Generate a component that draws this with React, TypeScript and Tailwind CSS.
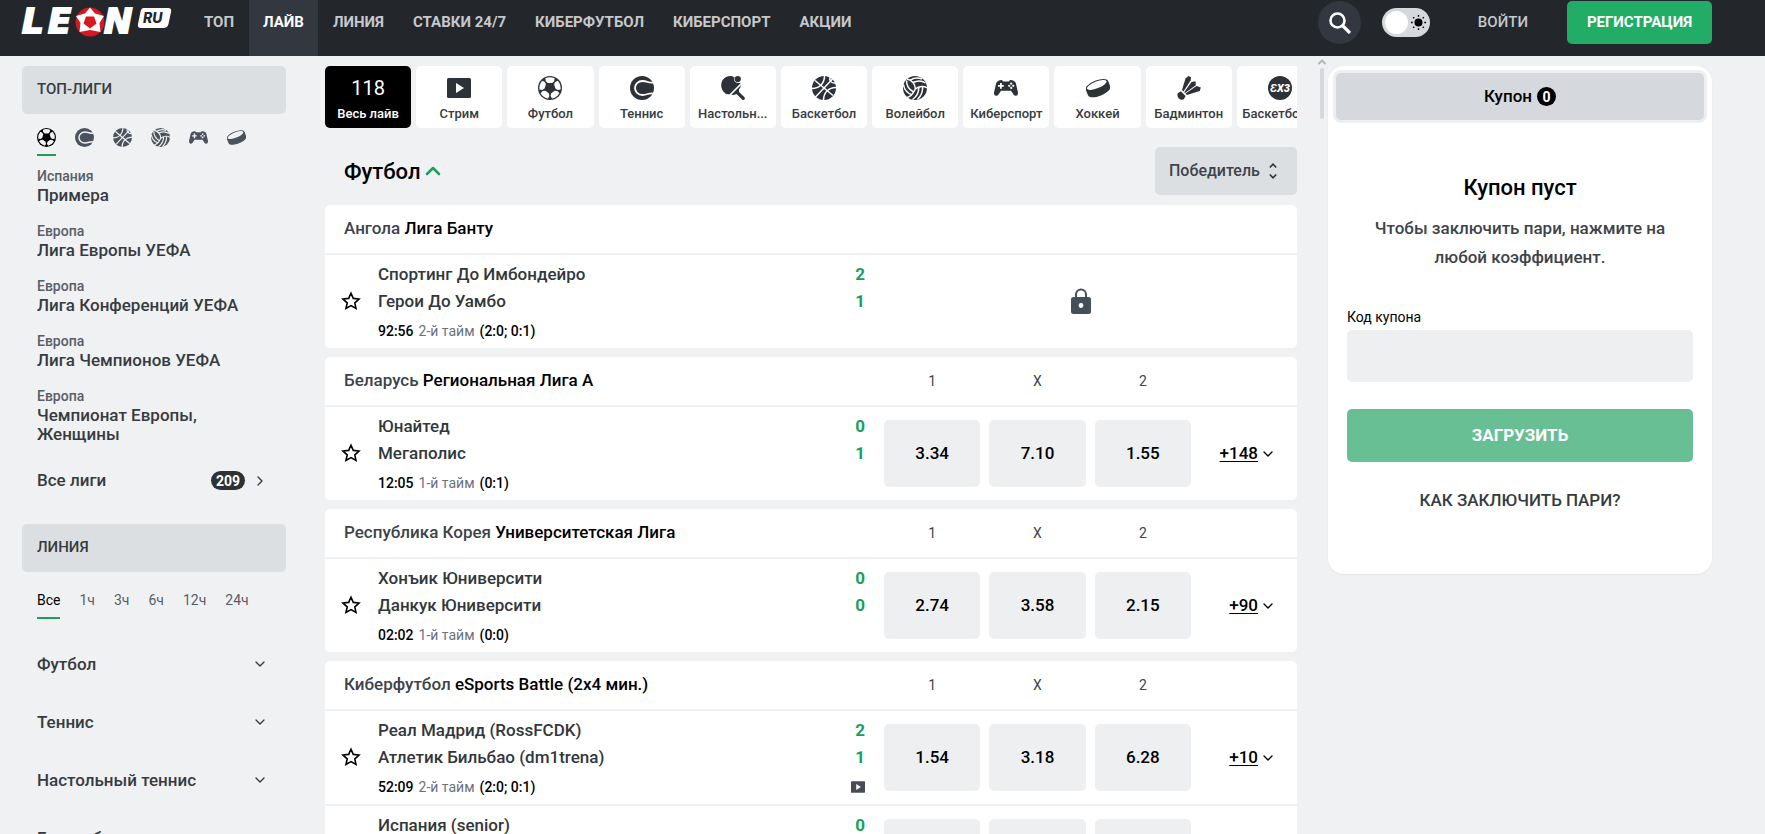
import { ChevronDown, ChevronRight, ChevronUp } from 'lucide-react';
import { ReactNode, useState } from 'react';
import clsx from 'clsx';

type IconName =
  | 'stream'
  | 'football'
  | 'tennis'
  | 'tableTennis'
  | 'basketball'
  | 'volleyball'
  | 'esports'
  | 'hockey'
  | 'badminton'
  | 'basketball3x3';

interface Match {
  home: string;
  away: string;
  score: [number, number];
  time: string;
  period: string;
  periods: string;
  odds?: string[];
  more?: string;
  stream?: boolean;
}

interface League {
  region: string;
  name: string;
  matches: Match[];
}

const NAV = ['ТОП', 'ЛАЙВ', 'ЛИНИЯ', 'СТАВКИ 24/7', 'КИБЕРФУТБОЛ', 'КИБЕРСПОРТ', 'АКЦИИ'];

const SPORT_TABS: { icon: IconName; label: string }[] = [
  { icon: 'stream', label: 'Стрим' },
  { icon: 'football', label: 'Футбол' },
  { icon: 'tennis', label: 'Теннис' },
  { icon: 'tableTennis', label: 'Настольн...' },
  { icon: 'basketball', label: 'Баскетбол' },
  { icon: 'volleyball', label: 'Волейбол' },
  { icon: 'esports', label: 'Киберспорт' },
  { icon: 'hockey', label: 'Хоккей' },
  { icon: 'badminton', label: 'Бадминтон' },
  { icon: 'basketball3x3', label: 'Баскетбол...' },
];

const TOP_SPORTS: { icon: IconName; label: string }[] = [
  { icon: 'football', label: 'Футбол' },
  { icon: 'tennis', label: 'Теннис' },
  { icon: 'basketball', label: 'Баскетбол' },
  { icon: 'volleyball', label: 'Волейбол' },
  { icon: 'esports', label: 'Киберспорт' },
  { icon: 'hockey', label: 'Хоккей' },
];

const TOP_LEAGUES = [
  { region: 'Испания', name: 'Примера' },
  { region: 'Европа', name: 'Лига Европы УЕФА' },
  { region: 'Европа', name: 'Лига Конференций УЕФА' },
  { region: 'Европа', name: 'Лига Чемпионов УЕФА' },
  { region: 'Европа', name: 'Чемпионат Европы, Женщины' },
];

const HOURS = ['Все', '1ч', '3ч', '6ч', '12ч', '24ч'];

const LINE_SPORTS = ['Футбол', 'Теннис', 'Настольный теннис', 'Баскетбол'];

const LEAGUES: League[] = [
  {
    region: 'Ангола',
    name: 'Лига Банту',
    matches: [
      { home: 'Спортинг До Имбондейро', away: 'Герои До Уамбо', score: [2, 1], time: '92:56', period: '2-й тайм', periods: '(2:0; 0:1)' },
    ],
  },
  {
    region: 'Беларусь',
    name: 'Региональная Лига А',
    matches: [
      { home: 'Юнайтед', away: 'Мегаполис', score: [0, 1], time: '12:05', period: '1-й тайм', periods: '(0:1)', odds: ['3.34', '7.10', '1.55'], more: '+148' },
    ],
  },
  {
    region: 'Республика Корея',
    name: 'Университетская Лига',
    matches: [
      { home: 'Хонъик Юниверсити', away: 'Данкук Юниверсити', score: [0, 0], time: '02:02', period: '1-й тайм', periods: '(0:0)', odds: ['2.74', '3.58', '2.15'], more: '+90' },
    ],
  },
  {
    region: 'Киберфутбол',
    name: 'eSports Battle (2x4 мин.)',
    matches: [
      { home: 'Реал Мадрид (RossFCDK)', away: 'Атлетик Бильбао (dm1trena)', score: [2, 1], time: '52:09', period: '2-й тайм', periods: '(2:0; 0:1)', odds: ['1.54', '3.18', '6.28'], more: '+10', stream: true },
      { home: 'Испания (senior)', away: 'Франция (klever)', score: [0, 0], time: '12:40', period: '1-й тайм', periods: '(0:0)', odds: ['2.20', '3.60', '2.70'], more: '+12', stream: true },
    ],
  },
];

// --cut is the colour of the seams, it has to be the same as the surface behind the icon
const ICONS: Record<IconName, ReactNode> = {
  stream: (
    <>
      <rect x="0" y="2" width="24" height="20" rx="1.5" fill="currentColor" />
      <path d="M9 7l8 5-8 5z" fill="var(--cut)" />
    </>
  ),
  football: (
    <>
      <circle cx="12" cy="12" r="12" fill="currentColor" />
      {[0, 72, 144, 216, 288].map((angle) => (
        <path
          key={angle}
          d="M7.400 2.300Q12 .4 16.600 2.300L16.200 5.200L14.200 7H9.800L7.800 5.200z"
          transform={`rotate(${angle} 12 12)`}
          fill="var(--cut)"
        />
      ))}
    </>
  ),
  tennis: (
    <>
      <circle cx="12" cy="12" r="12" fill="currentColor" />
      <path d="M23 6.500C19 7.500 17.500 5 12.500 5C8 5 5 8.500 5 12C5 15.500 8 19 12.500 19C17.500 19 19 16.500 23 17.500" fill="none" stroke="var(--cut)" strokeWidth="1.800" />
    </>
  ),
  tableTennis: (
    <>
      <path d="M2.500 3C5.500-.5 11.500-.8 13.600 1.800C12.600 4 13.500 6.500 16.500 7C18 7.200 19 6.800 19.200 6.800C20.500 9.500 19.500 12 18 13.500L18 16L23.500 21.200Q24.500 23 23 23.800Q21.800 24.400 20.800 23.300L15.500 18L12.500 19L5 18C-.8 14-1 7 2.500 3z" fill="currentColor" />
      <circle cx="16.800" cy="3.100" r="3.100" fill="currentColor" />
      <path d="M7.500 20.500L20 8" stroke="var(--cut)" strokeWidth="1.700" />
    </>
  ),
  basketball: (
    <>
      <circle cx="12" cy="12" r="12" fill="currentColor" />
      <g fill="none" stroke="var(--cut)" strokeWidth="1.500">
        <path d="M3 4.500L21 19.500M20.500 3L3.500 21" />
        <path d="M12.500-.5C12.500 8 7 12.500-.5 12.500M24.500 11.500C17 11.500 11.500 16 11.500 24.500" />
        <path d="M18 .5C17 5 19.500 7.500 23.500 7" />
      </g>
    </>
  ),
  volleyball: (
    <>
      <circle cx="12" cy="12" r="12" fill="currentColor" />
      <g fill="none" stroke="var(--cut)" strokeWidth="1.500">
        <path d="M12.300 13C12.500 9 9.500 4 4 3M12.300 13C16 10 21 9.500 24 12M12.300 13C10 18 7 21 4 21.500" />
        <path d="M9.800 6.500C14 4.500 19 4.500 22.500 7M7 4.300C11 1.500 15 1.500 19 3" />
        <path d="M10.500 16C6 13.500 3.500 9 3.500 4.500M9 18.800C4 17 1 13 .5 8.500" />
        <path d="M15.800 11C16 16 13.500 20.500 9.500 23.500M19.500 10.200C20 15 18 20 14.500 23.500" />
      </g>
    </>
  ),
  esports: (
    <>
      <path d="M5 4.500Q6 3.800 8 4L9 5.500H15L16 4Q18 3.800 19 4.500Q21 5 21.800 7L24 16.500Q24.200 19.500 22 19.800Q20.500 20 19.500 18.500L17 14.800H7L4.500 18.500Q3.500 20 2 19.800Q-.2 19.500 0 16.500L2.200 7Q3 5 5 4.500z" fill="currentColor" />
      <g fill="var(--cut)">
        <path d="M6 7h1.800v2h2v1.800h-2v2H6v-2H4V9h2z" />
        <circle cx="15.200" cy="9.800" r="1.100" />
        <circle cx="19.200" cy="9.800" r="1.100" />
        <circle cx="17.200" cy="7.700" r="1.100" />
        <circle cx="17.200" cy="11.900" r="1.100" />
      </g>
    </>
  ),
  hockey: (
    <>
      <g transform="rotate(-22 12 12)">
        <path d="M0 9.500V15C0 18 5.500 20 12 20S24 18 24 15V9.500z" fill="currentColor" />
        <ellipse cx="12" cy="9" rx="12" ry="4.800" fill="currentColor" />
        <ellipse cx="12" cy="8.700" rx="10.500" ry="3.400" fill="var(--cut)" />
      </g>
    </>
  ),
  badminton: (
    <>
      <path d="M.8 17.200L3.800 15.200L8.600 20L6.800 23.200Q4.500 24.500 1.800 22.400Q-.4 19.800.8 17.200z" fill="currentColor" />
      <g fill="currentColor">
        <path d="M5 14L8.500 2.500L11.500 0L14 1.200L13.600 4.500L6.500 15.500z" />
        <path d="M7.200 16.200L14.500 6L18.500 5.200L18.800 9.200L8 17z" />
        <path d="M8.500 17.600L19.500 10L23.800 11.500L22.800 15L9.800 19z" />
      </g>
    </>
  ),
  basketball3x3: (
    <>
      <circle cx="12" cy="12" r="12" fill="currentColor" />
      <text x="12" y="16" textAnchor="middle" fontSize="11" fontWeight="900" fontStyle="italic" fill="var(--cut)" fontFamily="Roboto, sans-serif">
        ƐX3
      </text>
    </>
  ),
};

function SportIcon({ name, className }: { name: IconName; className?: string }) {
  return (
    <svg viewBox="0 0 24 24" className={clsx('shrink-0', className)} aria-hidden="true">
      {ICONS[name]}
    </svg>
  );
}

function Logo() {
  return (
    <svg viewBox="0 0 150 30" className="h-[30px] w-[150px] overflow-visible" role="img" aria-label="LEON RU">
      <g fill="#fff" stroke="#fff" strokeWidth="2" fontFamily="'DejaVu Sans', sans-serif" fontWeight="700" fontStyle="italic" fontSize="34">
        <text x="0" y="26">L</text>
        <text x="26" y="26">E</text>
        <text x="82" y="26">N</text>
      </g>
      <circle cx="68" cy="15" r="14.500" fill="#d8171e" />
      <path d="M68 .5L73 6.500L82 9L77.500 16L78.500 25L68 23L57.500 25L58.500 16L54 9L63 6.500z" fill="#fff" />
      <path d="M64 9.500H72L74.500 16.500L68 21.500L61.500 16.500z" fill="#d8171e" />
      <path d="M122 1H146Q150 1 149 5L146.500 17Q145.500 21 141.500 21H119Q115 21 116 17L118.500 5Q119 1 122 1z" fill="#fff" />
      <text x="121" y="16" fontFamily="Inter, sans-serif" fontWeight="800" fontStyle="italic" fontSize="14" fill="#23262b">
        RU
      </text>
    </svg>
  );
}

function Header() {
  return (
    <header className="flex h-14 items-center bg-[#23262b] pr-[53px] pl-[22px] text-[15px] font-bold text-[#c5c8cc]">
      <a href="#home" className="mr-[18px] pb-3">
        <Logo />
      </a>
      <nav className="flex h-full gap-px">
        {NAV.map((item) => (
          <a
            key={item}
            href={`#${item}`}
            className={clsx('flex items-center px-[14px] pb-3', item === 'ЛАЙВ' && 'bg-[#333840] text-white')}
          >
            {item}
          </a>
        ))}
      </nav>
      <div className="ml-auto flex items-center pb-3">
        <button className="flex size-[43px] items-center justify-center rounded-full bg-[#333840]" aria-label="Поиск">
          <svg viewBox="0 0 24 24" className="size-6" fill="none" stroke="#fff" strokeWidth="2.600">
            <circle cx="10.500" cy="10.500" r="7" />
            <path d="M15.500 15.500L23 23" strokeWidth="3.200" />
          </svg>
        </button>
        <label className="relative ml-[21px] h-[29px] w-12 cursor-pointer rounded-full bg-[#d5d8dd] p-[3px]">
          <input type="checkbox" className="peer sr-only" aria-label="Тёмная тема" />
          <span className="block size-[23px] rounded-full bg-white" />
          <svg viewBox="0 0 16 16" className="absolute top-[7px] right-[4px] size-[15px] text-black" aria-hidden="true">
            <circle cx="8" cy="8" r="4.300" fill="currentColor" />
            <path d="M8 0v1.800M8 14.200V16M0 8h1.800M14.200 8H16M2.300 2.300l1.200 1.200M12.500 12.500l1.200 1.200M2.300 13.700l1.200-1.200M12.500 3.500l1.200-1.200" stroke="currentColor" strokeWidth="1.500" />
          </svg>
        </label>
        <button className="ml-12 font-medium">ВОЙТИ</button>
        <button className="ml-[39px] h-[43px] w-[145px] rounded-[5px] bg-[#21ad66] text-white">РЕГИСТРАЦИЯ</button>
      </div>
    </header>
  );
}

function Sidebar() {
  const [hours, setHours] = useState('Все');

  return (
    <aside className="w-[264px] shrink-0 text-[17px] leading-[19px] font-medium text-[#363b41] [--cut:#f0f1f3]">
      <h2 className="flex h-12 items-center rounded-[5px] bg-[#dcdfe2] px-[15px] pb-px text-[15px]">ТОП-ЛИГИ</h2>
      <div className="mt-[14px] flex gap-[19px] px-[15px]">
        {TOP_SPORTS.map(({ icon, label }, i) => (
          <button
            key={icon}
            aria-label={label}
            className={clsx('border-b-2 pb-[7px]', i === 0 ? 'border-[#1b9f5c] text-black' : 'border-transparent text-[#4a525c]')}
          >
            <SportIcon name={icon} className="size-[19px]" />
          </button>
        ))}
      </div>
      <ul className="mt-[11px] flex flex-col gap-[17px] px-[15px]">
        {TOP_LEAGUES.map(({ region, name }) => (
          <li key={name}>
            <a href="#league" className="block">
              <span className="block text-sm leading-[19px] text-[#565e67]">{region}</span>
              {name}
            </a>
          </li>
        ))}
      </ul>
      <a href="#all" className="mt-[27px] flex h-[19px] items-center pr-[18px] pl-[15px]">
        Все лиги
        <span className="ml-auto flex h-[19px] items-center rounded-full bg-[#2d3237] px-[5px] text-sm font-bold text-white">209</span>
        <ChevronRight className="ml-[7px] size-4" />
      </a>

      <h2 className="mt-[34px] flex h-12 items-center rounded-[5px] bg-[#dcdfe2] px-[15px] pb-px text-[15px]">ЛИНИЯ</h2>
      <div className="mt-[19px] flex gap-[19px] px-[15px] text-sm font-normal">
        {HOURS.map((item) => (
          <button
            key={item}
            onClick={() => setHours(item)}
            className={clsx('border-b-2 pb-[7px] leading-[19px]', hours === item ? 'border-[#1b9f5c] text-black' : 'border-transparent text-[#565e67]')}
          >
            {item}
          </button>
        ))}
      </div>
      <ul className="mt-4">
        {LINE_SPORTS.map((sport) => (
          <li key={sport}>
            <button className="flex h-[58px] w-full items-center justify-between pr-[18px] pl-[15px]">
              {sport}
              <ChevronDown className="size-4" />
            </button>
          </li>
        ))}
      </ul>
    </aside>
  );
}

function MatchRow({ match }: { match: Match }) {
  return (
    <div className="flex h-[95px] items-center border-t-2 border-[#f0f1f3]">
      <button className="ml-4 pb-px text-black" aria-label="В избранное">
        <svg viewBox="0 0 20 20" className="size-5" fill="none" stroke="currentColor" strokeWidth="1.600">
          <path d="M10 2.200L12.300 7.400L18 8L13.800 11.800L15 17.500L10 14.600L5 17.500L6.200 11.800L2 8L7.700 7.400z" />
        </svg>
      </button>
      <div className="ml-[17px] min-w-0 flex-1 pb-px text-[17px] leading-[27px] font-medium text-[#32373d]">
        <div className="flex justify-between">
          <span className="truncate">{match.home}</span>
          <span className="font-bold text-[#1b9f5c]">{match.score[0]}</span>
        </div>
        <div className="flex justify-between">
          <span className="truncate">{match.away}</span>
          <span className="font-bold text-[#1b9f5c]">{match.score[1]}</span>
        </div>
        <div className="mt-[6px] flex items-center gap-[5px] text-sm leading-5 text-black">
          <span>{match.time}</span>
          <span className="font-normal text-[#6b727a]">{match.period}</span>
          <span>{match.periods}</span>
          {match.stream && <SportIcon name="stream" className="ml-auto size-[14px] text-[#454d57] [--cut:#fff]" />}
        </div>
      </div>
      {match.odds ? (
        <>
          <div className="ml-[19px] grid w-[307px] grid-cols-3 gap-[9px]">
            {match.odds.map((odd) => (
              <button key={odd} className="h-[67px] rounded-[5px] bg-[#eeeff1] text-[17px] font-medium text-black">
                {odd}
              </button>
            ))}
          </div>
          <a href="#match" className="flex w-[106px] items-center justify-end pr-[21px] text-[17px] font-medium text-black">
            <span className="underline underline-offset-2">{match.more}</span>
            <ChevronDown className="ml-[2px] size-4" />
          </a>
        </>
      ) : (
        <div className="ml-[19px] flex w-[413px] justify-center pr-[19px] pb-[2px] text-[#464e58]">
          <svg viewBox="0 0 20 26" className="h-[26px] w-5" aria-label="Приём ставок закрыт">
            <path d="M5 10V6.500a5 5 0 0 1 10 0V10" fill="none" stroke="currentColor" strokeWidth="2" />
            <rect x="0" y="9" width="20" height="17" rx="2.500" fill="currentColor" />
            <circle cx="10" cy="17.500" r="2.400" fill="#fff" />
          </svg>
        </div>
      )}
    </div>
  );
}

function LeagueCard({ league }: { league: League }) {
  const hasOdds = league.matches.some((match) => match.odds);

  return (
    <section className="overflow-hidden rounded-[5px] bg-white">
      <header className="flex h-12 items-center pr-[106px] pl-[19px]">
        <h3 className="flex-1 text-[17px] font-medium text-black">
          <span className="text-[#3d434a]">{league.region}</span> {league.name}
        </h3>
        {hasOdds && (
          <div className="grid w-[307px] grid-cols-3 gap-[9px] text-center text-sm text-[#3d434a]">
            <span>1</span>
            <span>X</span>
            <span>2</span>
          </div>
        )}
      </header>
      {league.matches.map((match) => (
        <MatchRow key={match.home} match={match} />
      ))}
    </section>
  );
}

function LiveFeed() {
  return (
    <main className="ml-[39px] min-w-0 flex-1">
      <div className="overflow-hidden">
        <div className="-mr-[26px] grid grid-cols-11 gap-[5px] text-[13px] leading-4 font-medium text-[#363b41]">
          <button className="flex h-[62px] flex-col items-center rounded-[5px] bg-black pt-[10px] text-white">
            <span className="text-xl leading-6 font-normal">118</span>
            <span className="mt-[6px]">Весь лайв</span>
          </button>
          {SPORT_TABS.map(({ icon, label }) => (
            <button key={icon} className="flex h-[62px] min-w-0 flex-col items-center rounded-[5px] bg-white pt-[10px]">
              <SportIcon name={icon} className="size-6 text-[#2c3238] [--cut:#fff]" />
              <span className="mt-[6px] whitespace-nowrap">{label}</span>
            </button>
          ))}
        </div>
      </div>

      <div className="mt-[19px] flex h-12 items-center justify-between pl-[19px]">
        <button className="flex items-center text-[22px] font-medium text-black">
          Футбол
          <ChevronUp className="size-6 text-[#1b9f5c]" strokeWidth={2.5} />
        </button>
        <div className="relative">
          <select
            aria-label="Тип ставки"
            className="h-12 w-[142px] appearance-none rounded-[5px] bg-[#dcdfe2] pl-[14px] text-base font-medium text-[#3d434a]"
          >
            <option>Победитель</option>
          </select>
          <svg viewBox="0 0 8 16" className="pointer-events-none absolute top-4 right-5 h-4 w-2" fill="none" stroke="#2c3238" strokeWidth="1.600">
            <path d="M.8 4.500L4 1.200L7.200 4.500M.8 11.500L4 14.800L7.200 11.500" />
          </svg>
        </div>
      </div>

      <div className="mt-[10px] flex flex-col gap-[9px]">
        {LEAGUES.map((league) => (
          <LeagueCard key={league.name} league={league} />
        ))}
      </div>
    </main>
  );
}

function Coupon() {
  return (
    <aside className="w-96 shrink-0 self-start rounded-2xl bg-white px-[5px] pt-1 pb-[62px] shadow-xs">
      <button className="flex h-[53px] w-full items-center justify-center gap-[5px] rounded-lg border-[3px] border-[#eeeff1] bg-[#d5d8dd] text-[17px] font-medium text-black">
        Купон
        <span className="flex size-[19px] items-center justify-center rounded-full bg-black text-sm font-bold text-white">0</span>
      </button>
      <div className="px-[14px] pt-[50px] text-center">
        <h2 className="text-[22px] leading-[30px] font-medium text-black">Купон пуст</h2>
        <p className="mx-auto mt-[11px] w-[320px] text-[17px] leading-[29px] font-medium text-[#3d434a]">
          Чтобы заключить пари, нажмите на любой коэффициент.
        </p>
        <form className="mt-[35px]">
          <label htmlFor="coupon-code" className="block text-left text-sm leading-5 text-black">
            Код купона
          </label>
          <input id="coupon-code" type="text" className="mt-[3px] block h-[52px] w-full rounded-[5px] bg-[#eeeff1] px-4" />
          <button type="button" className="mt-[27px] h-[53px] w-full rounded-[5px] bg-[#69bf94] text-[17px] font-bold text-white">
            ЗАГРУЗИТЬ
          </button>
        </form>
        <a href="#help" className="mt-[26px] block text-[17px] leading-6 font-medium text-[#363b41]">
          КАК ЗАКЛЮЧИТЬ ПАРИ?
        </a>
      </div>
    </aside>
  );
}

export default function App() {
  return (
    <div className="flex h-screen flex-col overflow-hidden bg-[#f0f1f3] font-['Roboto',sans-serif]">
      <Header />
      <div className="flex min-h-0 flex-1 pt-[10px] pr-[53px] pl-[22px]">
        <Sidebar />
        <LiveFeed />
        {/* Feed scrollbar */}
        <div className="relative w-[31px] shrink-0">
          <ChevronUp className="absolute -top-[10px] left-[19px] size-3 text-[#b3b6ba]" strokeWidth={4} />
          <div className="absolute top-[2px] left-[23px] h-[51px] w-1 rounded-full bg-[#d5d8dd]" />
        </div>
        <Coupon />
      </div>
    </div>
  );
}
